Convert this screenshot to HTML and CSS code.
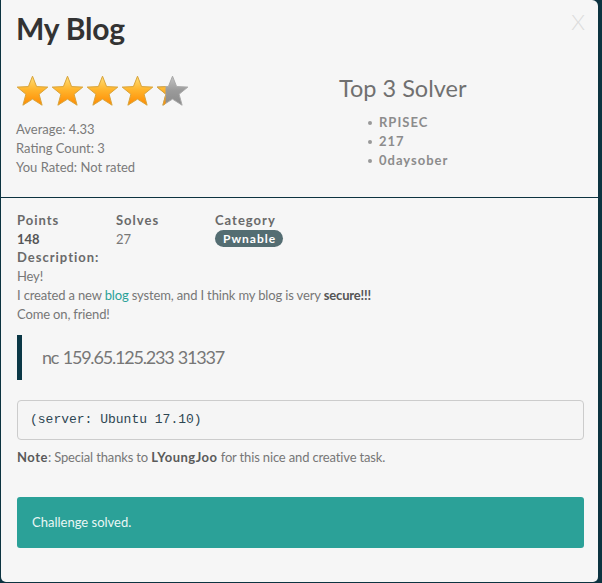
FILE: index.html
```html
<!DOCTYPE html>
<html>
<head>
<meta charset="utf-8">
<link rel="stylesheet" href="styles.css">
</head>
<body>
<div class="modal">
  <span class="close">X</span>
  <div class="head">
    <h1 class="title">My Blog</h1>
    <div class="summary">
      <div class="rating">
        <svg class="stars" width="175" height="33" viewBox="0 0 175 33">
          <defs>
            <linearGradient id="gold" x1="0" y1="0" x2="0" y2="1">
              <stop offset="0" stop-color="#ffe07a"/>
              <stop offset="0.45" stop-color="#ffb62e"/>
              <stop offset="1" stop-color="#ff8a00"/>
            </linearGradient>
            <linearGradient id="grey" x1="0" y1="0" x2="0" y2="1">
              <stop offset="0" stop-color="#c4c4c4"/>
              <stop offset="0.5" stop-color="#9a9a9a"/>
              <stop offset="1" stop-color="#8a8a8a"/>
            </linearGradient>
            <clipPath id="part"><rect x="0" y="0" width="9.5" height="33"/></clipPath>
          </defs>
          <g stroke-width="1" stroke-linejoin="round">
            <path fill="url(#gold)" stroke="#d9a43a" d="M16.5 1.2 L20.6 11.6 L31.8 12.1 L23.1 19.2 L26.1 30.2 L16.5 24.1 L6.9 30.2 L9.9 19.2 L1.2 12.1 L12.4 11.6 Z"/>
            <path transform="translate(35 0)" fill="url(#gold)" stroke="#d9a43a" d="M16.5 1.2 L20.6 11.6 L31.8 12.1 L23.1 19.2 L26.1 30.2 L16.5 24.1 L6.9 30.2 L9.9 19.2 L1.2 12.1 L12.4 11.6 Z"/>
            <path transform="translate(70 0)" fill="url(#gold)" stroke="#d9a43a" d="M16.5 1.2 L20.6 11.6 L31.8 12.1 L23.1 19.2 L26.1 30.2 L16.5 24.1 L6.9 30.2 L9.9 19.2 L1.2 12.1 L12.4 11.6 Z"/>
            <path transform="translate(105 0)" fill="url(#gold)" stroke="#d9a43a" d="M16.5 1.2 L20.6 11.6 L31.8 12.1 L23.1 19.2 L26.1 30.2 L16.5 24.1 L6.9 30.2 L9.9 19.2 L1.2 12.1 L12.4 11.6 Z"/>
            <g transform="translate(140 0)">
              <path fill="url(#grey)" stroke="#a8a8a8" d="M16.5 1.2 L20.6 11.6 L31.8 12.1 L23.1 19.2 L26.1 30.2 L16.5 24.1 L6.9 30.2 L9.9 19.2 L1.2 12.1 L12.4 11.6 Z"/>
              <path clip-path="url(#part)" fill="url(#gold)" stroke="#d9a43a" d="M16.5 1.2 L20.6 11.6 L31.8 12.1 L23.1 19.2 L26.1 30.2 L16.5 24.1 L6.9 30.2 L9.9 19.2 L1.2 12.1 L12.4 11.6 Z"/>
            </g>
          </g>
        </svg>
        <div class="stats">
          <div>Average: 4.33</div>
          <div>Rating Count: 3</div>
          <div>You Rated: Not rated</div>
        </div>
      </div>
      <div class="solvers">
        <h3 class="solvers-title">Top 3 Solver</h3>
        <ul class="solver-list">
          <li>RPISEC</li>
          <li>217</li>
          <li>0daysober</li>
        </ul>
      </div>
    </div>
  </div>
  <div class="body">
    <div class="meta">
      <div class="label">Points</div>
      <div class="label">Solves</div>
      <div class="label">Category</div>
      <div class="value strong">148</div>
      <div class="value">27</div>
      <div class="value"><span class="badge">Pwnable</span></div>
    </div>
    <div class="label">Description:</div>
    <div class="desc">
      <p>Hey!</p>
      <p>I created a new <a class="link">blog</a> system, and I think my blog is very <b>secure!!!</b></p>
      <p>Come on, friend!</p>
    </div>
    <blockquote class="quote">nc 159.65.125.233 31337</blockquote>
    <pre class="code">(server: Ubuntu 17.10)</pre>
    <p class="note"><b>Note</b>: Special thanks to <b>LYoungJoo</b> for this nice and creative task.</p>
    <div class="alert">Challenge solved.</div>
  </div>
</div>
</body>
</html>
```

FILE: styles.css
```css
html, body {
  margin: 0;
  padding: 0;
  background: #0c3340;
  height: 583px;
  overflow: hidden;
}
.modal {
  position: relative;
  margin-left: 1px;
  width: 597px;
  height: 582px;
  background: #f6f6f6;
  border-radius: 0 6px 5px 5px;
  font-family: "Lato", "Liberation Sans", sans-serif;
  font-size: 13px;
  line-height: 18.7px;
  color: #777;
  box-sizing: border-box;
}
.close {
  position: absolute;
  top: 10px;
  right: 13px;
  font-size: 22px;
  line-height: 24px;
  color: #dcdcdc;
  font-family: "Lato", sans-serif;
  font-weight: 300;
}
.head {
  padding: 12px 16px 20px 15px;
  border-bottom: 1px solid #0d3340;
}
.title {
  margin: 0;
  font-family: "Lato", "Liberation Sans", sans-serif;
  font-weight: 700;
  font-size: 30px;
  line-height: 33px;
  letter-spacing: -0.2px;
  color: #333;
}
.summary {
  display: flex;
}
.rating {
  width: 285px;
  padding-top: 30px;
}
.stars {
  display: block;
}
.stats {
  margin-top: 12px;
  color: #7a7a7a;
  font-size: 13px;
  line-height: 19px;
}
.solvers {
  padding-top: 29px;
  padding-left: 38px;
}
.solvers-title {
  margin: 0;
  font-weight: 400;
  font-size: 23.5px;
  line-height: 28px;
  color: #707070;
}
.solver-list {
  list-style: none;
  margin: 11px 0 0 29px;
  padding: 0;
  color: #8c8c8c;
  font-size: 13px;
  line-height: 19px;
  letter-spacing: 1px;
  font-weight: 700;
}
.solver-list li {
  display: flex;
  align-items: center;
}
.solver-list li::before {
  content: "";
  width: 4px;
  height: 4px;
  border-radius: 50%;
  background: #999;
  margin-right: 7px;
}
.body {
  padding: 13px 14px 0 16px;
}
.meta {
  display: grid;
  grid-template-columns: 99px 99px 1fr;
}
.label {
  font-weight: 700;
  color: #6a6a6a;
  letter-spacing: 1px;
}
.value {
  color: #777;
}
.strong {
  font-weight: 700;
  color: #555;
}
.badge {
  display: inline-block;
  background: #546d72;
  color: #fff;
  font-weight: 700;
  font-size: 12px;
  line-height: 17px;
  letter-spacing: 1px;
  padding: 0 7px 0 8px;
  border-radius: 9px;
  vertical-align: 1px;
}
.desc p {
  margin: 0;
  letter-spacing: -0.15px;
}
.link {
  color: #2ba198;
}
.desc b {
  color: #555;
}
.quote {
  margin: 12px 0 0 0;
  padding: 10px 20px;
  border-left: 5px solid #0b3846;
  font-size: 18px;
  line-height: 25px;
  letter-spacing: -1.2px;
  word-spacing: 1px;
  color: #777;
}
.code {
  margin: 20px 0 0 0;
  padding: 10px 12px;
  border: 1px solid #cccccc;
  border-radius: 4px;
  background: #f5f5f5;
  font-family: "Liberation Mono", monospace;
  font-size: 13px;
  line-height: 18px;
  color: #2d4652;
}
.note {
  margin: 8px 0 0 0;
  color: #777;
  letter-spacing: -0.15px;
}
.note b {
  color: #5a5a5a;
  letter-spacing: 0.5px;
}
.alert {
  margin-top: 30px;
  padding: 16px 15px;
  background: #2ba198;
  border-radius: 3px;
  color: #eaf7f5;
}
```
